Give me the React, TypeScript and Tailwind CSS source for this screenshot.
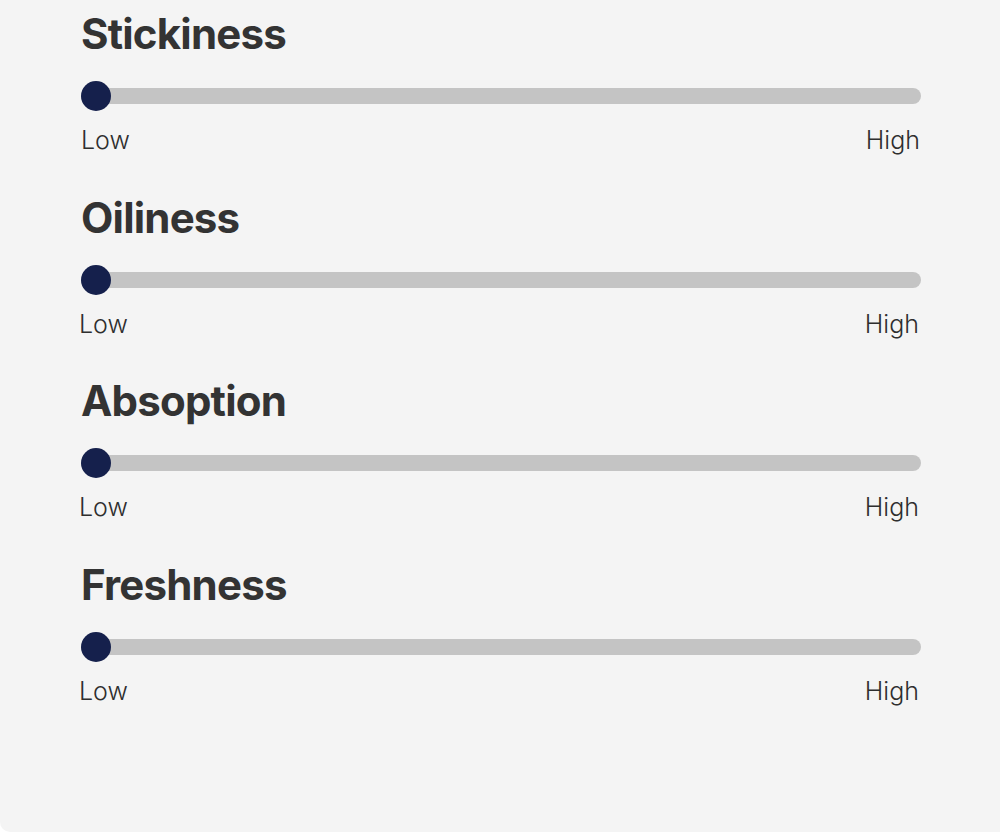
import { useState } from 'react';

interface SliderRow {
  label: string;
  value: number;
  nudge: boolean;
}

const initialRows: SliderRow[] = [
  { label: 'Stickiness', value: 0, nudge: false },
  { label: 'Oiliness', value: 0, nudge: true },
  { label: 'Absoption', value: 0, nudge: true },
  { label: 'Freshness', value: 0, nudge: true },
];

const App = () => {
  const [rows] = useState<SliderRow[]>(initialRows);

  return (
    <div className="min-h-screen bg-white" style={{ fontFamily: 'Inter, "Noto Sans", sans-serif' }}>
      <div className="h-[832px] bg-[#f4f4f4] rounded-bl-[10px] pl-[81px] pr-[79px] pt-[9px]">
        {rows.map((row, i) => (
          <div key={row.label} className={i > 0 ? 'mt-[36.7px]' : ''}>
            {/* 标题 */}
            <h2 className="text-[42px] leading-[50px] font-bold tracking-[-0.8px] text-[#333333]">
              {row.label}
            </h2>

            {/* 滑块 */}
            <div className="relative mt-[22px] h-[30px] flex items-center">
              <div className="w-full h-[16px] rounded-full bg-[#c4c4c4]"></div>
              <div
                className="absolute top-0 w-[30px] h-[30px] rounded-full bg-[#15204c]"
                style={{ left: `calc(${row.value}% - ${row.value * 0.3}px)` }}
              ></div>
            </div>

            {/* 刻度文字 */}
            <div
              className={`mt-[13px] flex justify-between text-[25px] leading-[32px] font-light text-[#2e2e2e] ${
                row.nudge ? '-ml-[2px] mr-[2px]' : 'mr-[1px]'
              }`}
            >
              <span>Low</span>
              <span>High</span>
            </div>
          </div>
        ))}
      </div>
    </div>
  );
};

export default App;
